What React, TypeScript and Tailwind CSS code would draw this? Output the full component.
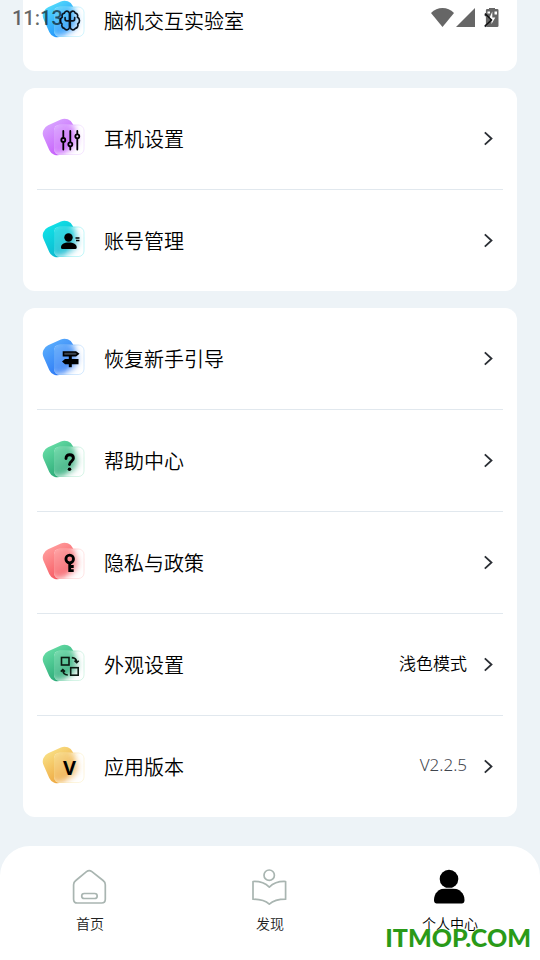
import { useId, type ReactNode } from "react";

type MenuItem = {
  title: string;
  from: string;
  to: string;
  glyph: ReactNode;
  value?: string;
  valueClass?: string;
};

const groups: MenuItem[][] = [
  [
    {
      title: "脑机交互实验室",
      from: "#4fd8fb",
      to: "#1f8dfb",
      glyph: (
        <g
          fill="none"
          stroke="#0b1420"
          strokeWidth="1.9"
          strokeLinecap="round"
          strokeLinejoin="round"
          transform="translate(3.500 2) scale(0.870 0.920)"
        >
          <path d="M27.5 13.5a3 3 0 0 0-5.8-.3 3 3 0 0 0-2.4 4.3 4.2 4.2 0 0 0-.3 7.4 3.4 3.4 0 0 0 2.7 4.8 3.2 3.2 0 0 0 5.8-.6z" />
          <path d="M28.5 13.5a3 3 0 0 1 5.8-.3 3 3 0 0 1 2.4 4.3 4.2 4.2 0 0 1 .3 7.4 3.4 3.4 0 0 1-2.7 4.8 3.2 3.2 0 0 1-5.8-.6z" />
          <path d="M22.500 18v1.500q0 2 2 2h7q2 0 2-2V18" />
        </g>
      ),
    },
  ],
  [
    {
      title: "耳机设置",
      from: "#d7a0ff",
      to: "#c558fb",
      glyph: (
        <g fill="none" stroke="#000" strokeWidth="1.8" strokeLinecap="round">
          <path d="M21.300 14v6.500M21.300 26v6.500M28.300 14v10.500M28.300 30v2.500M35.300 14v2.500M35.300 22v10.500" />
          <circle cx="21.300" cy="23" r="2" />
          <circle cx="28.300" cy="27.300" r="2" />
          <circle cx="35.300" cy="19.300" r="2" />
        </g>
      ),
    },
    {
      title: "账号管理",
      from: "#10dfe6",
      to: "#0bb4cc",
      glyph: (
        <g>
          <circle cx="26.500" cy="18.500" r="4.200" />
          <path d="M19 28.500c0-3.500 3-5 7.700-5s8 1.500 8 5q0 1.500-1.500 1.500H20.500Q19 30 19 28.500z" />
          <path d="M33.500 19h4M34 21.500h3.500" stroke="#000" strokeWidth="1.400" />
        </g>
      ),
    },
  ],
  [
    {
      title: "恢复新手引导",
      from: "#56a9fc",
      to: "#2a76f5",
      glyph: (
        <g>
          <path d="M21.500 15h12.300l2.400 1.800-2.400 1.800H21.500z" fill="#3b4450" stroke="#000" strokeWidth="1.600" />
          <path d="M36.500 22v5.200H23L20 24.600l3-2.600z" />
          <path d="M26.800 18.500h3v11.700h-3z" />
        </g>
      ),
    },
    {
      title: "帮助中心",
      from: "#62d9a2",
      to: "#26a573",
      glyph: (
        <g>
          <path d="M24 19.500c0-2.700 1.600-3.800 3.700-3.800s3.700 1.300 3.700 3.600c0 3-3.900 3-3.900 6.200" fill="none" stroke="#000" strokeWidth="2.900" strokeLinecap="round" />
          <circle cx="27.500" cy="30.200" r="1.800" />
        </g>
      ),
    },
    {
      title: "隐私与政策",
      from: "#ff9a9a",
      to: "#f5525c",
      glyph: (
        <g fill="none" stroke="#000" strokeWidth="2.800">
          <circle cx="27.700" cy="18" r="3.800" />
          <path d="M27.700 21.500V31M27.700 25.500h4M27.700 29.600h4" />
        </g>
      ),
    },
    {
      title: "外观设置",
      from: "#62d9a2",
      to: "#26a573",
      value: "浅色模式",
      valueClass: "pb-[3px] text-[17px] font-[350] text-black",
      glyph: (
        <g fill="none" stroke="#0b1a12" strokeWidth="1.600">
          <rect x="19.500" y="14.500" width="7.500" height="7.500" />
          <rect x="28.700" y="24.700" width="7.500" height="7.500" />
          <path d="M29.800 14.600c3 .2 4.700 1.800 4.900 4.400M32.500 17.700l2.200 2 2-2" />
          <path d="M25.800 32c-3-.2-4.700-1.800-4.900-4.500M23 28.600l-2.200-2-2 2" />
        </g>
      ),
    },
    {
      title: "应用版本",
      from: "#f8dc80",
      to: "#eda33a",
      value: "V2.2.5",
      valueClass: "pb-[3px] text-[17px] font-light text-[#3f454d] font-['Noto_Sans']",
      glyph: (
        <text x="27.500" y="30" textAnchor="middle" className="font-['Open_Sans'] text-[20px] font-bold">
          V
        </text>
      ),
    },
  ],
];

// Tilted tile with a frosted square in front of it.
const TileIcon = ({ from, to, children }: { from: string; to: string; children: ReactNode }) => {
  const id = useId();
  return (
    <svg width="44" height="43" viewBox="0 0 44 43" className="shrink-0" aria-hidden="true">
      <defs>
        <linearGradient id={`${id}fill`} x1="0.300" y1="0" x2="0.500" y2="1">
          <stop offset="0" stopColor={from} />
          <stop offset="1" stopColor={to} />
        </linearGradient>
        <linearGradient id={`${id}fade`} x1="0" y1="0.300" x2="1" y2="0.700">
          <stop offset="0.500" stopColor="#fff" stopOpacity="0" />
          <stop offset="1" stopColor="#fff" stopOpacity="0.900" />
        </linearGradient>
        <filter id={`${id}blur`} x="-30%" y="-30%" width="160%" height="160%">
          <feGaussianBlur stdDeviation="3" />
        </filter>
        <clipPath id={`${id}clip`}>
          <rect x="12" y="7.500" width="30.500" height="30.500" rx="6" />
        </clipPath>
      </defs>
      <rect x="3" y="4" width="32" height="32" rx="9" transform="rotate(-24 19 20)" fill={`url(#${id}fill)`} />
      <g clipPath={`url(#${id}clip)`}>
        <rect x="12" y="7.500" width="30.500" height="30.500" fill="#fff" />
        <rect
          x="3"
          y="4"
          width="32"
          height="32"
          rx="9"
          transform="rotate(-24 19 20)"
          fill={`url(#${id}fill)`}
          filter={`url(#${id}blur)`}
          opacity="0.850"
        />
        <rect x="12" y="7.500" width="30.500" height="30.500" fill={`url(#${id}fade)`} />
      </g>
      <rect x="12.500" y="8" width="29.500" height="29.500" rx="5.500" fill="none" stroke={from} strokeOpacity="0.250" />
      {children}
    </svg>
  );
};

const Chevron = () => (
  <svg width="10" height="15" viewBox="0 0 10 15" className="ml-4 shrink-0" fill="none" stroke="#2a2e34" strokeWidth="1.800" aria-hidden="true">
    <path d="M1.800 1.300 8.500 7.500l-6.700 6.200" />
  </svg>
);

const MenuRow = ({ item }: { item: MenuItem }) => (
  <li>
    <button type="button" className="flex h-[101px] w-full items-center pr-[10px] pl-[5px] text-left">
      <TileIcon from={item.from} to={item.to}>
        {item.glyph}
      </TileIcon>
      <span className="ml-[18px] flex-1 text-xl font-[350] text-black">{item.title}</span>
      {item.value && <span className={item.valueClass}>{item.value}</span>}
      <Chevron />
    </button>
  </li>
);

const StatusBar = () => (
  <div className="absolute inset-x-0 top-0 flex h-9 items-center justify-between pr-[41px] pl-3 text-black/60">
    <span className="font-['Roboto'] text-xl font-medium">11:13</span>
    <svg width="68" height="20" viewBox="0 0 68 20" fill="#666" aria-hidden="true">
      <path d="M0 5Q5 0 11.500 0T23 5L11.500 19z" />
      <path d="M25 19 44 0v19z" />
      <path d="M58 0h6v1h2.200q1.300 0 1.300 1.300v15.500q0 1.200-1.300 1.200H56.200q-1.300 0-1.300-1.300V2.300q0-1.300 1.300-1.300H58z" />
      <path d="M61.300 3.500v6h3L60.500 16v-5h-2.500zM56.500 3.500H59v2h-2.500zM63.500 3.500H66v3h-2.500z" fill="#fff" />
      <path d="M54 5.500 60.500 12 54 18" fill="none" stroke="#111" strokeWidth="1.500" />
    </svg>
  </div>
);

const tabs = [
  {
    label: "首页",
    active: false,
    icon: (
      <g fill="none" stroke="#a9b5b1" strokeWidth="1.700" strokeLinejoin="round">
        <path d="M14.500 2.700q2.700-2.200 5.400 0l11.200 8.800q2.200 1.700 2.200 4.200v14.600q0 3.700-3.700 3.700H5.300q-3.700 0-3.700-3.700V15.700q0-2.500 2.200-4.200z" />
        <rect x="9.700" y="24.500" width="15.500" height="5" rx="2.500" />
      </g>
    ),
  },
  {
    label: "发现",
    active: false,
    icon: (
      <g fill="none" stroke="#a9b5b1" strokeWidth="1.700" strokeLinejoin="round">
        <circle cx="17.200" cy="6.200" r="5.200" />
        <path d="M1 12.500q10-.5 16.300 5.700 6.300-6.200 16.300-5.700v17.700q-11 0-16.300 5Q12 30.200 1 30.200z" />
      </g>
    ),
  },
  {
    label: "个人中心",
    active: true,
    icon: (
      <g>
        <circle cx="17" cy="10" r="9.300" />
        <path d="M2 31c0-7 5-11.500 11-11.500h8c6 0 11.500 4.500 11.500 11.500 0 3-1.500 3.500-4.500 3.500H6.500C3.500 34.500 2 34 2 31z" />
        <path d="M7 19.200h20" stroke="#fff" strokeWidth="0.800" />
      </g>
    ),
  },
];

const TabBar = () => (
  <nav className="grid h-[114px] shrink-0 grid-cols-3 rounded-t-[30px] bg-white">
    {tabs.map((tab) => (
      <a key={tab.label} href="#" className="flex flex-col items-center gap-2 pt-[23px]">
        <svg width="36" height="36" viewBox="0 0 36 36" aria-hidden="true">
          {tab.icon}
        </svg>
        <span className={`text-sm font-[350] ${tab.active ? "text-black" : "text-[#222]"}`}>{tab.label}</span>
      </a>
    ))}
  </nav>
);

export default function App() {
  return (
    <div className="relative flex h-screen flex-col overflow-hidden bg-[#edf3f7] font-['Noto_Sans_CJK_SC',sans-serif]">
      <main className="flex min-h-0 flex-1 flex-col justify-end gap-[17px] overflow-hidden px-[23px] pb-[29px]">
        {groups.map((items) => (
          <ul key={items[0].title} className="shrink-0 divide-y divide-[#e1e8ee] rounded-xl bg-white px-[14px]">
            {items.map((item) => (
              <MenuRow key={item.title} item={item} />
            ))}
          </ul>
        ))}
      </main>
      <TabBar />
      <StatusBar />
      <p className="absolute right-[9px] bottom-1 font-['Lato'] text-[25px] leading-[38px] font-black text-[#2a9a18]">ITMOP.COM</p>
    </div>
  );
}
